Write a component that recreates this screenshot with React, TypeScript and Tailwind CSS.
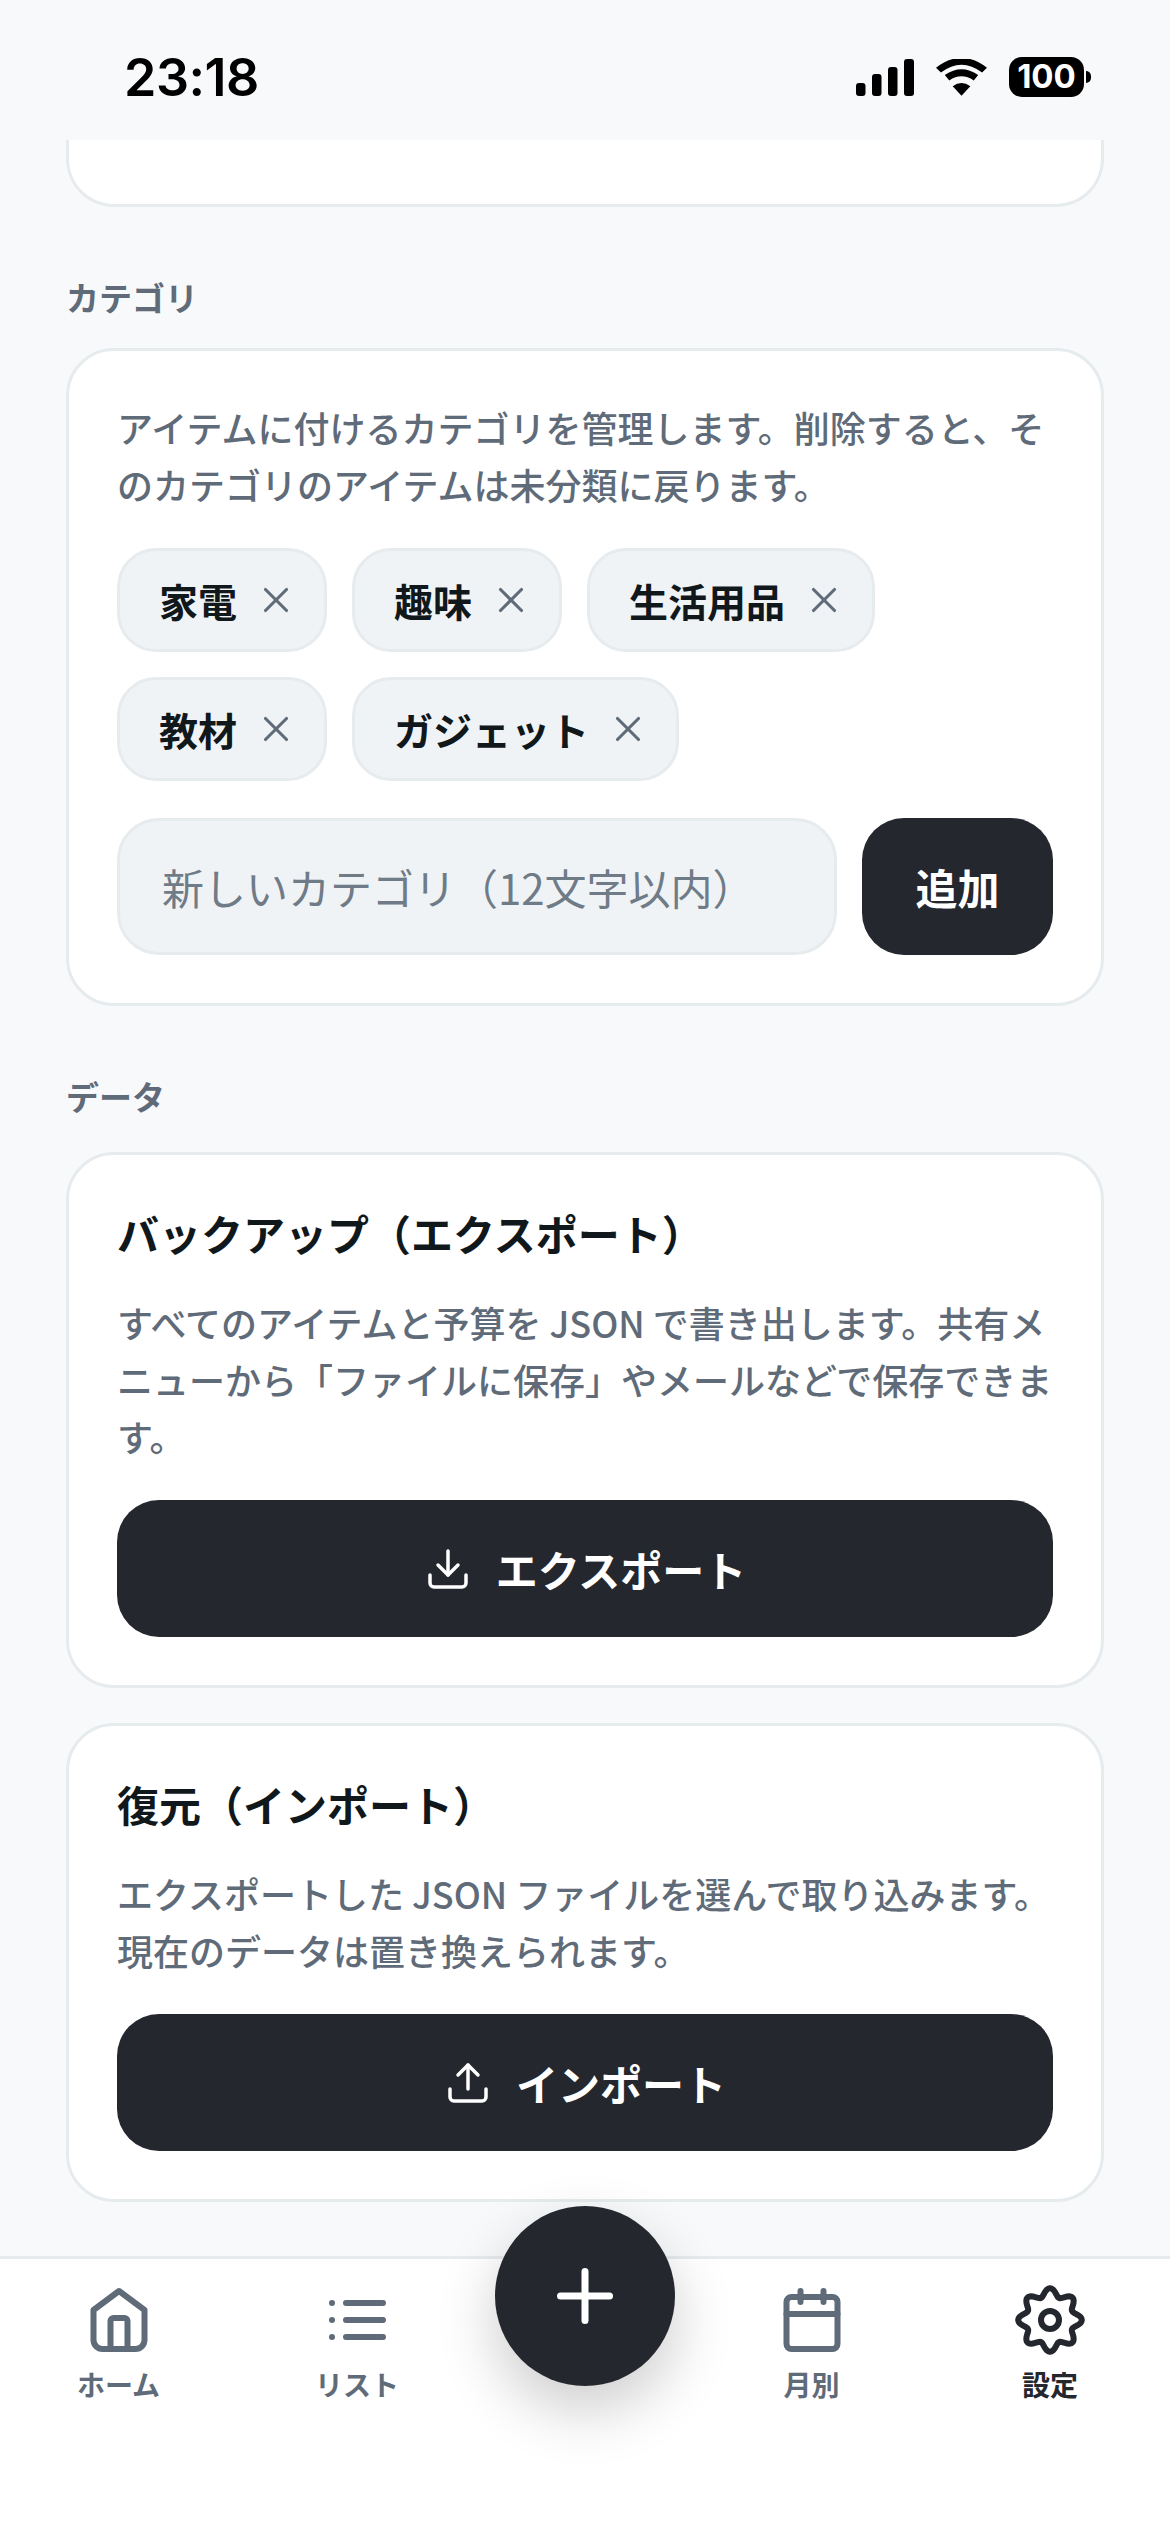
import React from "react";
import { Download, Upload, Plus, X } from "lucide-react";

const categories = ["家電", "趣味", "生活用品", "教材", "ガジェット"];

const HomeIcon = () => (
  <svg width="72" height="72" viewBox="0 0 72 72" fill="none" stroke="currentColor" strokeWidth="6" strokeLinecap="round" strokeLinejoin="round">
    <path d="M10.5 26 L36 7 L61.5 26 V56 a9 9 0 0 1 -9 9 H19.5 a9 9 0 0 1 -9 -9 Z" />
    <path d="M27.5 65 V37 a3 3 0 0 1 3 -3 h11 a3 3 0 0 1 3 3 V65" />
  </svg>
);

const ListIcon = () => (
  <svg width="72" height="72" viewBox="0 0 72 72" fill="none" stroke="currentColor" strokeWidth="6" strokeLinecap="round">
    <path d="M25 19 H62 M25 36 H62 M25 53 H62" />
    <path d="M11 19 h.01 M11 36 h.01 M11 53 h.01" />
  </svg>
);

const CalendarIcon = () => (
  <svg width="72" height="72" viewBox="0 0 72 72" fill="none" stroke="currentColor" strokeWidth="6" strokeLinecap="round" strokeLinejoin="round">
    <rect x="10.5" y="13" width="51" height="52" rx="5" />
    <path d="M24.5 7 V18 M47.5 7 V18 M10.5 30 H61.5" />
  </svg>
);

// eight soft lobes, sampled around the circle
const gearPath = Array.from({ length: 120 }, (_, i) => {
  const a = (i / 120) * Math.PI * 2;
  const r = 27.8 + 4 * Math.cos(8 * a);
  return `${i === 0 ? "M" : "L"}${(36 + r * Math.sin(a)).toFixed(2)} ${(36 - r * Math.cos(a)).toFixed(2)}`;
}).join(" ") + " Z";

const GearIcon = () => (
  <svg width="72" height="72" viewBox="0 0 72 72" fill="none" stroke="currentColor" strokeWidth="6" strokeLinejoin="round">
    <path d={gearPath} />
    <circle cx="36" cy="36" r="9" />
  </svg>
);

const SignalIcon = () => (
  <svg width="58" height="37" viewBox="0 0 58 37" fill="currentColor">
    <rect x="0" y="24" width="9.5" height="13" rx="3" />
    <rect x="16" y="15" width="9.5" height="22" rx="3" />
    <rect x="32" y="8" width="9.5" height="29" rx="3" />
    <rect x="48" y="0" width="10" height="37" rx="3" />
  </svg>
);

const WifiIcon = () => (
  <svg width="51" height="37" viewBox="0 0 52 37" fill="currentColor">
    <path d="M26 37 L17 27.5 Q26 20.5 35 27.5 Z" />
    <path d="M9 16 Q26 4 43 16 L38.5 21.5 Q26 13 13.5 21.5 Z" />
    <path d="M0 8.5 Q26 -11.5 52 8.5 L47 13.5 Q26 -2.5 5 13.5 Z" />
  </svg>
);

const SectionLabel = ({ children }: { children: React.ReactNode }) => (
  <div className="h-[48px] text-[33px] leading-[48px] font-semibold text-[#5f6b78]">{children}</div>
);

const ActionCard = ({ title, body, children }: { title: string; body: React.ReactNode; children: React.ReactNode }) => (
  <section className="rounded-[48px] border-[3px] border-[#e6ebee] bg-white p-[48px]">
    <h2 className="text-[42px] leading-[60px] font-bold text-[#11181c]">{title}</h2>
    <p className="mt-[31px] text-[36px] leading-[57px] font-medium text-[#5f6b78]">{body}</p>
    <button className="mt-[35px] flex h-[137px] w-full items-center justify-center gap-[24px] rounded-[42px] bg-[#24272e] text-[42px] font-bold text-white">
      {children}
    </button>
  </section>
);

const NavItem = ({ icon, label, active }: { icon: React.ReactNode; label: string; active?: boolean }) => (
  <div className={`flex flex-col items-center ${active ? "text-[#24272e]" : "text-[#5f6b78]"}`}>
    {icon}
    <span className="mt-[8px] text-[28px] leading-[40px] font-semibold">{label}</span>
  </div>
);

export default function App() {
  return (
    <div className="flex h-[2532px] w-[1170px] flex-col overflow-hidden bg-[#f8f9fb] font-['Noto_Sans_CJK_JP','Noto_Sans',sans-serif]">
      {/* Status bar */}
      <div className="flex h-[140px] shrink-0 items-start justify-between pl-[124px] pr-[79px] pt-[57px] text-black">
        <span className="font-['Inter',sans-serif] text-[52px] leading-[42px] font-semibold tracking-[-0.5px]">23:18</span>
        <div className="flex items-start gap-[22px] pt-[2px]">
          <SignalIcon />
          <WifiIcon />
          <div className="flex items-center gap-[2px]">
            <div className="-mt-[2px] flex h-[40px] w-[75px] items-center justify-center rounded-[13px] bg-black font-['Inter',sans-serif] text-[33px] font-bold text-white">
              100
            </div>
            <div className="-mt-[2px] h-[12px] w-[5px] rounded-r-full bg-black" />
          </div>
        </div>
      </div>

      {/* Scrolled content */}
      <main className="min-h-0 flex-1 overflow-hidden px-[66px]">
        <div className="h-[67px] rounded-b-[48px] border-[3px] border-t-0 border-[#e6ebee] bg-white" />

        <div className="mt-[66px]">
          <SectionLabel>カテゴリ</SectionLabel>
        </div>
        <section className="mt-[27px] rounded-[48px] border-[3px] border-[#e6ebee] bg-white p-[48px]">
          <p className="text-[36px] leading-[57px] font-medium text-[#5f6b78]">
            アイテムに付けるカテゴリを管理します。削除すると、そのカテゴリのアイテムは未分類に戻ります。
          </p>
          <div className="mt-[35px] flex flex-wrap gap-x-[25px] gap-y-[25px]">
            {categories.map((c) => (
              <div
                key={c}
                className="flex h-[104px] items-center gap-[18px] rounded-[39px] border-[3px] border-[#e6ebee] bg-[#f0f3f6] pl-[39px] pr-[27px] text-[39px] font-semibold text-[#11181c]"
              >
                {c}
                <X size={42} strokeWidth={1.8} className="text-[#5f6b78]" />
              </div>
            ))}
          </div>
          <div className="mt-[37px] flex gap-[25px]">
            <input
              readOnly
              placeholder="新しいカテゴリ（12文字以内）"
              className="h-[137px] min-w-0 flex-1 rounded-[42px] border-[3px] border-[#e6ebee] bg-[#f0f3f6] px-[42px] text-[42px] outline-none placeholder:text-[#6f7b87]"
            />
            <button className="h-[137px] w-[191px] rounded-[42px] bg-[#24272e] text-[42px] font-bold text-white">追加</button>
          </div>
        </section>

        <div className="mt-[66px]">
          <SectionLabel>データ</SectionLabel>
        </div>
        <div className="mt-[32px] flex flex-col gap-[35px]">
          <ActionCard title="バックアップ（エクスポート）" body="すべてのアイテムと予算を JSON で書き出します。共有メニューから「ファイルに保存」やメールなどで保存できます。">
            <Download size={48} strokeWidth={1.75} />
            エクスポート
          </ActionCard>
          <ActionCard title="復元（インポート）" body="エクスポートした JSON ファイルを選んで取り込みます。現在のデータは置き換えられます。">
            <Upload size={48} strokeWidth={1.75} />
            インポート
          </ActionCard>
        </div>
      </main>

      {/* Tab bar */}
      <nav className="relative z-10 grid h-[276px] shrink-0 grid-cols-[237px_240px_216px_237px_240px] border-t-[3px] border-[#e6ebee] bg-white pt-[25px]">
        <NavItem icon={<HomeIcon />} label="ホーム" />
        <NavItem icon={<ListIcon />} label="リスト" />
        <div />
        <NavItem icon={<CalendarIcon />} label="月別" />
        <NavItem icon={<GearIcon />} label="設定" active />
        <button className="absolute left-[495px] top-[-53px] flex h-[180px] w-[180px] items-center justify-center rounded-full bg-[#24272e] text-white shadow-[0_24px_60px_rgba(0,0,0,0.2)]">
          <Plus size={84} strokeWidth={2} />
        </button>
      </nav>
    </div>
  );
}
